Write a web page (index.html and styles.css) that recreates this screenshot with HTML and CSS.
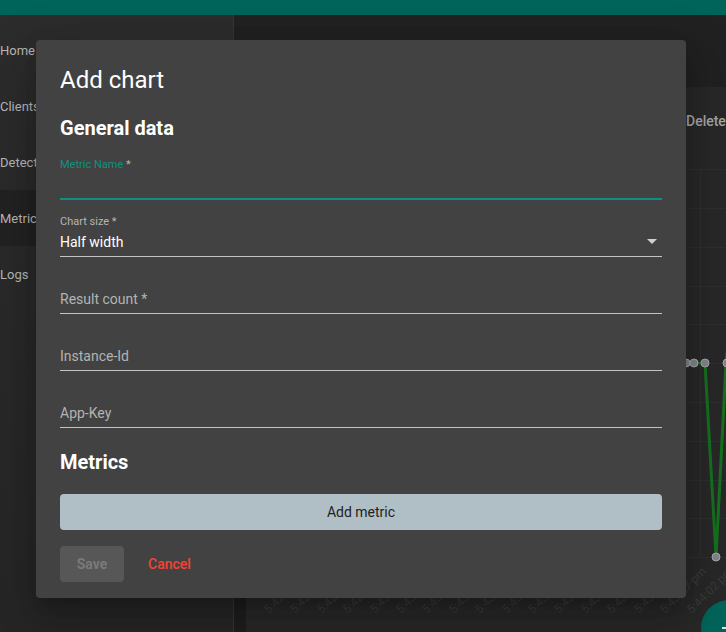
FILE: index.html
```html
<!DOCTYPE html>
<html lang="en">
<head>
<meta charset="utf-8">
<title>Add chart</title>
<link rel="stylesheet" href="styles.css">
</head>
<body>
<div class="app">
  <header class="topbar"></header>
  <div class="main">
    <nav class="sidebar">
      <div class="nav-item">Home</div>
      <div class="nav-item">Clients</div>
      <div class="nav-item">Detect</div>
      <div class="nav-item active">Metrics</div>
      <div class="nav-item">Logs</div>
    </nav>
    <section class="content">
      <div class="content-head"></div>
      <div class="content-body">
        <div class="strip"></div>
        <div class="card">
          <div class="card-head"><span class="delete">Delete</span></div>
          <svg class="chart" width="480" height="470" viewBox="0 0 480 470">
            <g stroke="#2f2f2f" stroke-width="1">
              <line x1="0" y1="0.5" x2="480" y2="0.5"/>
              <line x1="0" y1="39.5" x2="480" y2="39.5"/>
              <line x1="0" y1="78.5" x2="480" y2="78.5"/>
              <line x1="0" y1="117.5" x2="480" y2="117.5"/>
              <line x1="0" y1="155.5" x2="480" y2="155.5"/>
              <line x1="0" y1="194.5" x2="480" y2="194.5"/>
              <line x1="0" y1="233.5" x2="480" y2="233.5"/>
              <line x1="0" y1="272.5" x2="480" y2="272.5"/>
              <line x1="0" y1="311.5" x2="480" y2="311.5"/>
              <line x1="0" y1="349.5" x2="480" y2="349.5"/>
              <line x1="0" y1="388.5" x2="480" y2="388.5"/>
              <line x1="454.5" y1="0" x2="454.5" y2="388"/>
            </g>
            <polyline points="380,194 440,194 448,194 459,194 470,388 480,194 490,100" fill="none" stroke="#15701f" stroke-width="3"/>
            <g fill="#80858a" stroke="#a3a8ad" stroke-width="1">
              <circle cx="440" cy="194" r="4"/>
              <circle cx="448" cy="194" r="4"/>
              <circle cx="459" cy="194" r="4"/>
              <circle cx="470" cy="388" r="4"/>
              <circle cx="481" cy="194" r="4"/>
            </g>
            <g class="axis-labels" fill="#3a3a3a" font-size="12" text-anchor="end">
              <text x="65" y="403" transform="rotate(-45 65 403)">5:42:42 pm</text>
              <text x="91" y="403" transform="rotate(-45 91 403)">5:42:47 pm</text>
              <text x="118" y="403" transform="rotate(-45 118 403)">5:42:52 pm</text>
              <text x="144" y="403" transform="rotate(-45 144 403)">5:42:57 pm</text>
              <text x="171" y="403" transform="rotate(-45 171 403)">5:43:02 pm</text>
              <text x="197" y="403" transform="rotate(-45 197 403)">5:43:07 pm</text>
              <text x="223" y="403" transform="rotate(-45 223 403)">5:43:12 pm</text>
              <text x="250" y="403" transform="rotate(-45 250 403)">5:43:17 pm</text>
              <text x="276" y="403" transform="rotate(-45 276 403)">5:43:22 pm</text>
              <text x="303" y="403" transform="rotate(-45 303 403)">5:43:27 pm</text>
              <text x="329" y="403" transform="rotate(-45 329 403)">5:43:32 pm</text>
              <text x="355" y="403" transform="rotate(-45 355 403)">5:43:37 pm</text>
              <text x="382" y="403" transform="rotate(-45 382 403)">5:43:42 pm</text>
              <text x="408" y="403" transform="rotate(-45 408 403)">5:43:47 pm</text>
              <text x="435" y="403" transform="rotate(-45 435 403)">5:43:52 pm</text>
              <text x="461" y="403" transform="rotate(-45 461 403)">5:43:57 pm</text>
              <text x="488" y="403" transform="rotate(-45 488 403)">5:44:02 pm</text>
            </g>
          </svg>
        </div>
      </div>
    </section>
  </div>

  <div class="fab"><span class="fab-plus"></span></div>

  <div class="dialog">
    <h1 class="dialog-title">Add chart</h1>
    <h2 class="section-title first">General data</h2>

    <div class="field focused">
      <div class="field-label">Metric Name <span class="req">*</span></div>
      <div class="field-value"></div>
    </div>

    <div class="field select">
      <div class="field-label">Chart size *</div>
      <div class="field-value">Half width<span class="arrow"></span></div>
    </div>

    <div class="field">
      <div class="field-label"></div>
      <div class="field-value placeholder">Result count *</div>
    </div>

    <div class="field">
      <div class="field-label"></div>
      <div class="field-value placeholder">Instance-Id</div>
    </div>

    <div class="field">
      <div class="field-label"></div>
      <div class="field-value placeholder">App-Key</div>
    </div>

    <h2 class="section-title">Metrics</h2>
    <button class="btn-add">Add metric</button>

    <div class="actions">
      <button class="btn-save">Save</button>
      <button class="btn-cancel">Cancel</button>
    </div>
  </div>
</div>
</body>
</html>
```

FILE: styles.css
```css
* { box-sizing: border-box; }

html, body {
  margin: 0;
  padding: 0;
  width: 726px;
  height: 632px;
  overflow: hidden;
  background: #202020;
  font-family: Roboto, "Liberation Sans", Arial, sans-serif;
}

.app {
  position: relative;
  width: 726px;
  height: 632px;
  display: flex;
  flex-direction: column;
}

.topbar {
  height: 15px;
  background: #00645a;
  flex: none;
}

.main {
  flex: 1;
  display: flex;
  min-height: 0;
}

.sidebar {
  width: 234px;
  flex: none;
  background: linear-gradient(#2c2c2c, #262626);
  border-right: 1px solid #353535;
  padding-top: 7px;
}

.nav-item {
  height: 56px;
  display: flex;
  align-items: center;
  font-size: 13px;
  color: #b8b8b8;
  padding-left: 0;
}

.nav-item.active {
  background: #222222;
}

.content {
  flex: 1;
  display: flex;
  flex-direction: column;
  min-width: 0;
}

.content-head {
  height: 72px;
  background: #212121;
  flex: none;
}

.content-body {
  flex: 1;
  display: flex;
  background: #1e1e1e;
}

.strip {
  width: 12px;
  flex: none;
  background: #1e1e1e;
}

.card {
  flex: 1;
  background: #282828;
  display: flex;
  flex-direction: column;
  overflow: hidden;
}

.card-head {
  height: 82px;
  flex: none;
  display: flex;
  justify-content: flex-start;
  align-items: center;
  padding-left: 440px;
  padding-bottom: 14px;
}

.delete {
  font-size: 14px;
  font-weight: 500;
  color: #a6a6a6;
  white-space: nowrap;
}

.chart {
  display: block;
  flex: none;
}

.axis-labels {
  font-family: Roboto, "Liberation Sans", Arial, sans-serif;
}

.fab {
  position: absolute;
  left: 701px;
  top: 600px;
  width: 56px;
  height: 56px;
  border-radius: 50%;
  background: #00645a;
}

.fab-plus {
  position: absolute;
  left: 21px;
  top: 27px;
  width: 14px;
  height: 2px;
  background: #e0e0e0;
}

/* Dialog */
.dialog {
  position: absolute;
  left: 36px;
  top: 40px;
  width: 650px;
  height: 558px;
  background: #424242;
  border-radius: 4px;
  padding: 24px 24px 16px;
  box-shadow: 0 11px 15px -7px rgba(0,0,0,0.2), 0 24px 38px 3px rgba(0,0,0,0.14), 0 9px 46px 8px rgba(0,0,0,0.12);
  color: #fff;
}

.dialog-title {
  margin: 0;
  font-size: 24px;
  font-weight: 400;
  line-height: 32px;
  color: #ffffff;
}

.section-title {
  margin: 20px 0 0;
  font-size: 20px;
  font-weight: 700;
  line-height: 28px;
  color: #ffffff;
}

.section-title.first {
  margin: 18px 0 1px;
}

.field {
  height: 57px;
  padding-top: 15px;
  display: flex;
  flex-direction: column;
}

.field-label {
  height: 14px;
  line-height: 14px;
  font-size: 11px;
  color: #b5b5b5;
}

.field-value {
  margin-top: 3px;
  height: 20px;
  line-height: 20px;
  font-size: 14px;
  color: #ffffff;
  position: relative;
}

.field-value.placeholder {
  color: #b3b3b3;
}

.field::after {
  content: "";
  display: block;
  margin-top: 4px;
  height: 1px;
  background: #c4c4c4;
}

.field.focused .field-label {
  color: #13907f;
}

.field.focused .req {
  color: #b5b5b5;
}

.field.focused::after {
  height: 2px;
  background: #0f8f7d;
}

.arrow {
  position: absolute;
  right: 5px;
  top: 7px;
  width: 0;
  height: 0;
  border-left: 5px solid transparent;
  border-right: 5px solid transparent;
  border-top: 5px solid #cfcfcf;
}

.btn-add {
  display: block;
  width: 100%;
  height: 36px;
  margin-top: 18px;
  border: 0;
  border-radius: 4px;
  background: #b0bec5;
  color: #222222;
  font-family: Roboto, "Liberation Sans", Arial, sans-serif;
  font-size: 14px;
  font-weight: 400;
  padding: 0;
}

.actions {
  margin-top: 16px;
  display: flex;
  gap: 8px;
}

.btn-save {
  width: 64px;
  height: 36px;
  border: 0;
  border-radius: 4px;
  background: #575757;
  color: #7a7a7a;
  font-family: Roboto, "Liberation Sans", Arial, sans-serif;
  font-size: 14px;
  font-weight: 700;
  padding: 0;
}

.btn-cancel {
  height: 36px;
  border: 0;
  background: transparent;
  color: #f44336;
  font-family: Roboto, "Liberation Sans", Arial, sans-serif;
  font-size: 14px;
  font-weight: 500;
  padding: 0 16px;
}
```
